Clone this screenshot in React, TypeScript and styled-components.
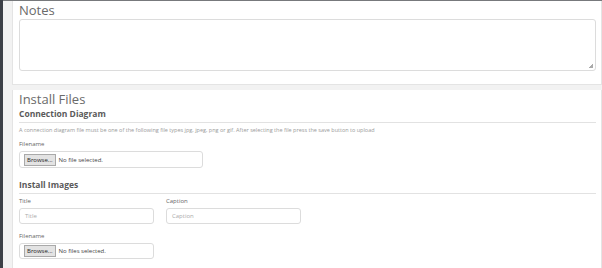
import React from 'react';
import styled, { createGlobalStyle } from 'styled-components';

const GlobalStyle = createGlobalStyle`
  html, body {
    margin: 0;
    padding: 0;
    background: #f2f2f2;
    font-family: "Open Sans", "Liberation Sans", sans-serif;
  }
  * {
    box-sizing: border-box;
  }
`;

const Page = styled.div`
  display: flex;
  width: 602px;
  height: 268px;
  overflow: hidden;
`;

const Sidebar = styled.div`
  width: 3px;
  background: #3c4047;
`;

const Main = styled.div`
  flex: 1;
  border-top: 1px solid #77797c;
  padding-left: 9px;
  display: flex;
  flex-direction: column;
  gap: 5px;
`;

const Panel = styled.div<{ $bottom?: number }>`
  background: #fff;
  border: 1px solid #e4e4e4;
  border-top: none;
  padding: 1px 5px ${p => p.$bottom ?? 0}px 6px;
`;

const PanelTitle = styled.div<{ $top?: number }>`
  font-size: 13px;
  line-height: 17px;
  color: #6a6a6a;
  font-weight: 400;
  margin-top: ${p => p.$top ?? 0}px;
`;

const SectionTitle = styled.div<{ $top?: number }>`
  font-size: 8.5px;
  line-height: 12px;
  font-weight: 700;
  color: #5a5a5a;
  margin-top: ${p => p.$top ?? 0}px;
  padding-bottom: 2px;
  border-bottom: 1px solid #e2e2e2;
`;

const NotesBox = styled.div`
  height: 52px;
  border: 1px solid #dcdcdc;
  border-radius: 3px;
  position: relative;
`;

const Grip = styled.div`
  position: absolute;
  right: 2px;
  bottom: 2px;
  width: 4px;
  height: 4px;
  background: linear-gradient(135deg, transparent 50%, #aaa 50%);
`;

const Help = styled.div`
  font-size: 5.5px;
  line-height: 8px;
  color: #9a9a9a;
  margin-top: 3px;
`;

const Label = styled.div<{ $top?: number }>`
  font-size: 6px;
  line-height: 8px;
  color: #666;
  margin-top: ${p => p.$top ?? 0}px;
  margin-bottom: 3px;
`;

const Row = styled.div`
  display: flex;
  gap: 12px;
  margin-top: 3px;
`;

const Field = styled.div`
  display: flex;
  flex-direction: column;
`;

const TextBox = styled.div<{ $w: number }>`
  width: ${p => p.$w}px;
  height: 16px;
  border: 1px solid #dcdcdc;
  border-radius: 3px;
  font-size: 6px;
  color: #aaa;
  display: flex;
  align-items: center;
  padding-left: 5px;
`;

const FileBox = styled.div<{ $w: number; $h: number }>`
  width: ${p => p.$w}px;
  height: ${p => p.$h}px;
  border: 1px solid #dcdcdc;
  border-radius: 3px;
  display: flex;
  align-items: center;
  gap: 3px;
  padding-left: 4px;
  font-size: 6px;
  color: #444;
`;

const Browse = styled.div`
  background: #e3e3e3;
  border: 1px solid #a9a9a9;
  font-size: 6px;
  line-height: 8px;
  padding: 1px 2px;
  color: #222;
`;

export default function App() {
  return (
    <Page>
      <GlobalStyle />
      <Sidebar />
      <Main>
        <Panel $bottom={13}>
          <PanelTitle>Notes</PanelTitle>
          <NotesBox>
            <Grip />
          </NotesBox>
        </Panel>
        <Panel $bottom={20}>
          <PanelTitle $top={0}>Install Files</PanelTitle>
          <SectionTitle>Connection Diagram</SectionTitle>
          <Help>
            A connection diagram file must be one of the following file types jpg, jpeg, png or gif. After selecting the file press the save button to upload
          </Help>
          <Label $top={6}>Filename</Label>
          <FileBox $w={184} $h={17}>
            <Browse>Browse...</Browse>
            No file selected.
          </FileBox>
          <SectionTitle $top={11}>Install Images</SectionTitle>
          <Row>
            <Field>
              <Label>Title</Label>
              <TextBox $w={135}>Title</TextBox>
            </Field>
            <Field>
              <Label>Caption</Label>
              <TextBox $w={135}>Caption</TextBox>
            </Field>
          </Row>
          <Label $top={8}>Filename</Label>
          <FileBox $w={135} $h={16}>
            <Browse>Browse...</Browse>
            No files selected.
          </FileBox>
        </Panel>
      </Main>
    </Page>
  );
}
